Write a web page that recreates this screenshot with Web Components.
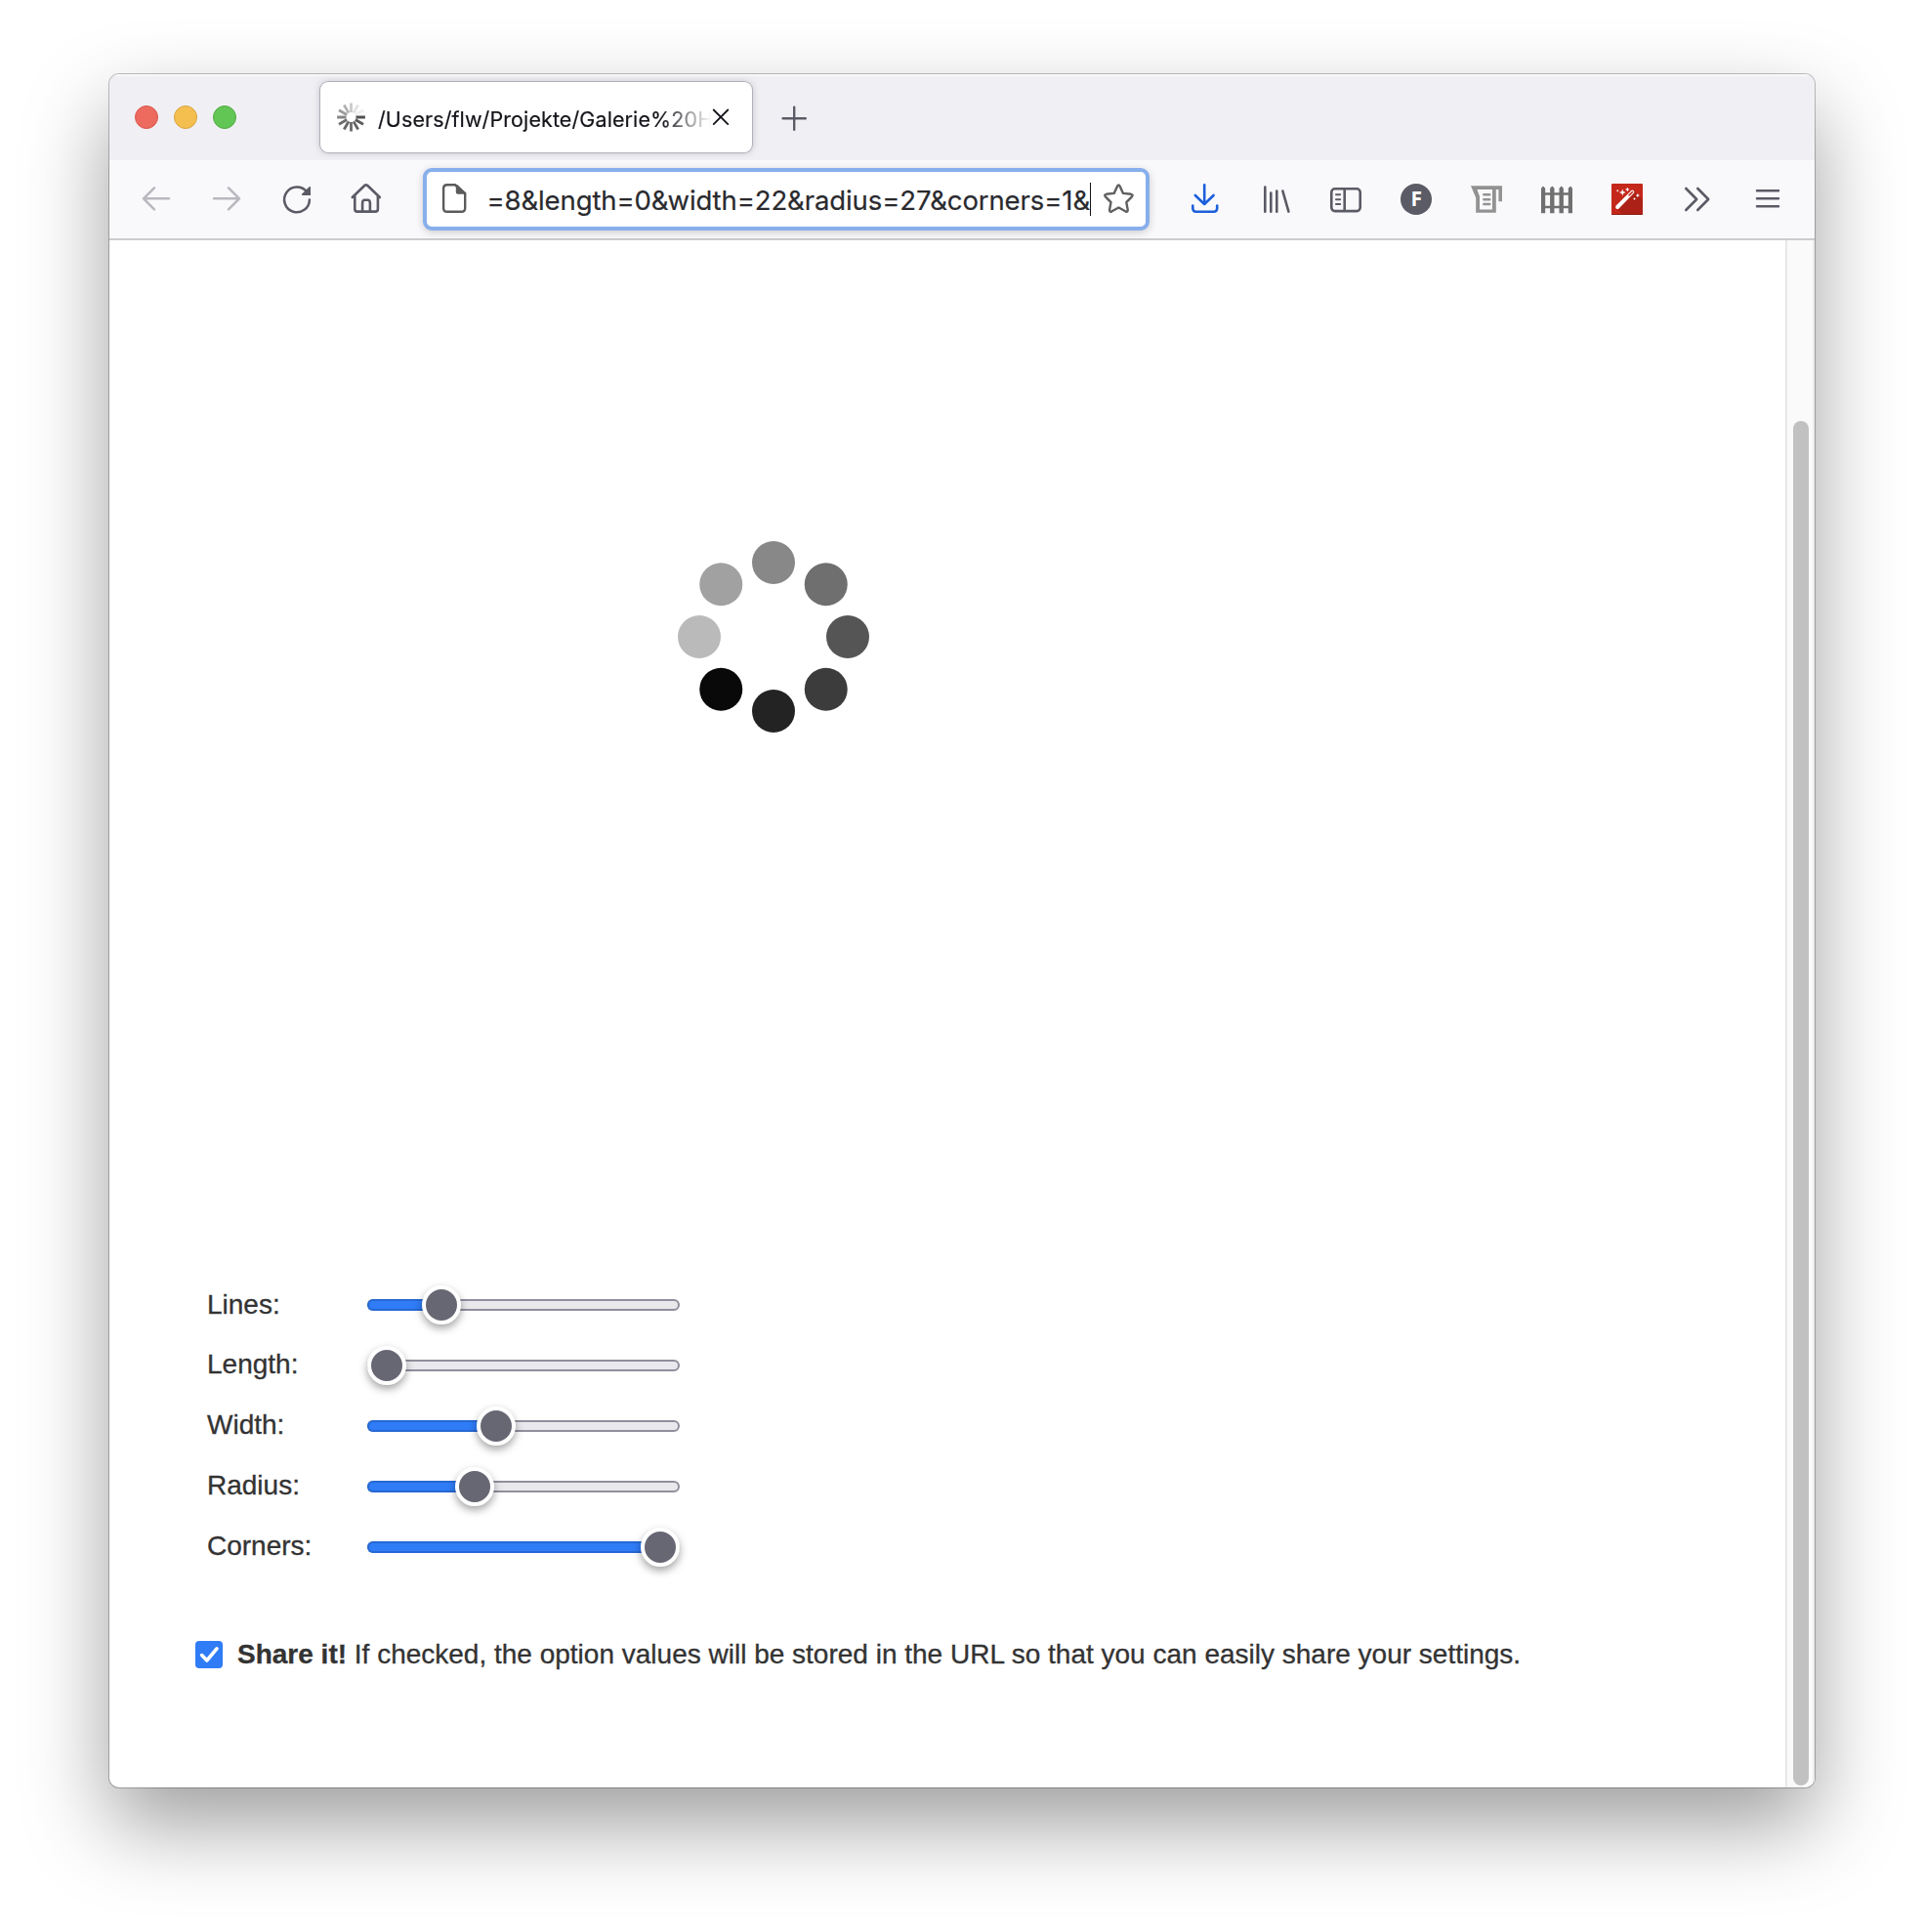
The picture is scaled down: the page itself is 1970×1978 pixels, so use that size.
<!DOCTYPE html>
<html lang="en">
<head>
<meta charset="utf-8">
<title>Spinner options</title>
<style>
html,body{margin:0;height:1978px;background:#fff;overflow:hidden}
body{box-sizing:border-box;padding:76px 112px 148px}
</style>
</head>
<body>
<browser-window>
  <tab-bar slot="chrome"><browser-tab>/Users/flw/Projekte/Galerie%20H</browser-tab></tab-bar>
  <nav-toolbar slot="chrome"><url-field>=8&amp;length=0&amp;width=22&amp;radius=27&amp;corners=1&amp;</url-field></nav-toolbar>
  <dot-spinner></dot-spinner>
  <option-list>
    <option-slider at="75.7">Lines:</option-slider>
    <option-slider at="20">Length:</option-slider>
    <option-slider at="131.8">Width:</option-slider>
    <option-slider at="109.8">Radius:</option-slider>
    <option-slider at="300">Corners:</option-slider>
  </option-list>
  <share-check><b>Share it!</b> If checked, the option values will be stored in the URL so that you can easily share your settings.</share-check>
</browser-window>
<script>
const define = (name, html, setup) => customElements.define(name, class extends HTMLElement {
  connectedCallback() {
    if (this.shadowRoot) return;
    this.attachShadow({ mode: 'open' }).innerHTML = html;
    if (setup) setup(this, this.shadowRoot);
  }
});

const icons = {
  back: `<g fill="none" stroke="#b8b8bf" stroke-width="2.5" stroke-linecap="round" stroke-linejoin="round"><path d="M7 17.3H33M18 6.3L7 17.3L18 28.3"/></g>`,
  forward: `<g fill="none" stroke="#b8b8bf" stroke-width="2.5" stroke-linecap="round" stroke-linejoin="round"><path d="M7 17.3H33M22 6.3L33 17.3L22 28.3"/></g>`,
  reload: `<path d="M30.2 10.5A12.9 12.9 0 1 0 32.9 18.5" fill="none" stroke="#5b5b66" stroke-width="2.5" stroke-linecap="round"/><path d="M34 5.2V14H25.6Q24.4 13.7 25.2 12.6L32.6 5.2Q33.4 4.6 34 5.2Z" fill="#5b5b66"/>`,
  home: `<g fill="none" stroke="#5b5b66" stroke-width="2.6" stroke-linecap="round" stroke-linejoin="round"><path d="M4.8 16L17.5 3.8Q18.8 2.8 20.1 3.8L32.8 16M7.3 14.5V28Q7.3 30.6 9.9 30.6H28.3Q30.9 30.6 30.9 28V14.5M15.1 30V22Q15.1 18.8 17.5 18.8H20.5Q22.9 18.8 22.9 22V30"/></g>`,
  page: `<path d="M14 3.3H21L31.2 12V27Q31.2 30.8 27.4 30.8H12.8Q9.1 30.8 9.1 27V7Q9.1 3.3 12.8 3.3Z" fill="none" stroke="#5b5b5b" stroke-width="2.4"/><path d="M21.8 3V10.7Q21.8 12.8 23.9 12.8H32.2V11.7L23.2 3Z" fill="#5b5b5b"/>`,
  star: `<path transform="translate(-.6 0)" d="M18.6 4.7Q20 2.3 21.3 4.7L24.6 11.9L32.6 12.8Q35.3 13.4 33.5 15.3L27.9 21.1L29.3 28.6Q29.6 31.6 26.9 30.3L20 26.5L13.1 30.3Q10.4 31.6 10.7 28.6L12.1 21.1L6.5 15.3Q4.7 13.4 7.4 12.8L15.3 11.9Z" fill="none" stroke="#5f5f61" stroke-width="2.4" stroke-linejoin="round"/>`,
  download: `<g fill="none" stroke="#1d5fdc" stroke-width="2.6" stroke-linecap="round" stroke-linejoin="round"><path d="M20.2 5.3V24.5M10.8 16L20.2 25L29.6 16M8.3 26.5V29.2Q8.3 32.7 11.8 32.7H29.7Q33.2 32.7 33.2 29.2V26.5"/></g>`,
  library: `<g stroke="#5b5b66" stroke-width="2.6" stroke-linecap="round"><path d="M10.3 7.5V32.7M16.3 13.5V32.7M22.3 11.5V32.7M28.4 11.6L34.4 32.6"/></g>`,
  sidebar: `<g fill="none" stroke="#5b5b66" stroke-width="2.6"><rect x="6.3" y="9.3" width="29.4" height="22.8" rx="3.5"/><path d="M19.7 9V32"/><path d="M11 15.3H15.2M11 20.2H15.2M11 25.1H15.2" stroke-width="2" stroke-linecap="round"/></g>`,
  fbadge: `<circle cx="21" cy="20" r="16" fill="#5b5b66"/><text x="21.2" y="27.3" text-anchor="middle" font-family="Noto Sans,sans-serif" font-size="21" font-weight="700" fill="#fff">F</text>`,
  reader: `<path fill="#929292" fill-rule="evenodd" d="M4 6.2H36V22.2H32.4V10H29.8V33.8H9.2V18.6L4 6.2ZM10.4 10L13 17V30.4H26V10Z"/><path d="M17.3 15.3H23.3M17.3 20.2H23.3M17.3 25H23.3" fill="none" stroke="#929292" stroke-width="2.4" stroke-linecap="round"/>`,
  fence: `<g fill="#707070"><path d="M4 34.3V8.7L6 6.4L8.2 8.7V34.3ZM13.1 34.3V8.7L15.3 6.4L17.5 8.7V34.3ZM22.5 34.3V8.7L24.7 6.4L26.9 8.7V34.3ZM31.8 34.3V8.7L34 6.4L36 8.7V34.3Z"/><path d="M4 13.2H36V15.7H4ZM4 26.8H36V29.3H4Z"/></g>`,
  wand: `<rect x="4" y="4" width="32" height="32" rx="1" fill="#c4281b"/><path d="M27.5 11.5L36 20V35H15L9 29Z" fill="#ac2117"/><path d="M4 35H36Q36 36 35 36H5Q4 36 4 35Z" fill="#8e180f"/><path d="M24.6 10.7Q25.6 10.2 26.8 11.3Q27.8 12.6 27.1 13.6L11.6 29.6Q10 30.7 8.7 29.4Q7.6 28 8.7 26.6Z" fill="#fff"/><path d="M21.5 15.8L25.4 12L26 12.7L22.2 16.5Z" fill="#c4281b" stroke="#c4281b" stroke-width=".8"/><path d="M15.3 9.5L16.2 12L18.7 13L16.2 13.9L15.3 16.4L14.4 13.9L11.9 13L14.4 12ZM20.3 7.7L21 9.3L22.6 10L21 10.7L20.3 12.3L19.6 10.7L18 10L19.6 9.3ZM30.8 14L31.5 15.4L33 16L31.5 16.7L30.8 18.2L30.1 16.7L28.6 16L30.1 15.4ZM27.5 18L28 19.2L29.2 19.6L28 20.1L27.5 21.3L27 20.1L25.8 19.6L27 19.2ZM10.2 9.7L10.7 10.8L11.8 11.2L10.7 11.6L10.2 12.7L9.7 11.6L8.6 11.2L9.7 10.8Z" fill="#fff"/>`,
  more: `<g fill="none" stroke="#5b5b66" stroke-width="2.6" stroke-linecap="round" stroke-linejoin="round"><path d="M8.3 9L19.2 20L8.3 31M20.3 9L31.2 20L20.3 31"/></g>`,
  menu: `<path d="M9 11.3H31M9 19.3H31M9 27.2H31" stroke="#5b5b66" stroke-width="2.5" stroke-linecap="round"/>`,
  close: `<path d="M12.7 12.5L27.3 27.1M27.3 12.5L12.7 27.1" stroke="#15141a" stroke-width="1.8" stroke-linecap="round"/>`,
  plus: `<path d="M19.2 9.6V32.8M7.6 21.2H30.8" stroke="#5b5b66" stroke-width="2.4" stroke-linecap="round"/>`
};
define('ui-icon', `<style>:host{display:block;width:40px;height:40px;flex:none}svg{display:block}</style><svg width="40" height="40" viewBox="0 0 40 40"></svg>`,
  (el, root) => { root.querySelector('svg').innerHTML = icons[el.getAttribute('name')]; });

define('browser-window', `<style>
:host{display:flex;flex-direction:column;box-sizing:border-box;width:1746px;height:1754px;border-radius:10px;background:#fff;overflow:hidden;
 box-shadow:0 0 0 1px rgba(0,0,0,.24),0 38px 86px rgba(0,0,0,.385)}
.view{flex:1;display:flex;min-height:0}
.page{flex:1;display:flex;flex-direction:column;align-items:flex-start}
</style><slot name="chrome"></slot><div class="view"><div class="page"><slot></slot></div><scroll-bar></scroll-bar></div>`);

define('scroll-bar', `<style>
:host{display:flex;box-sizing:border-box;width:30px;padding:185px 4px 2px 6px;background:#fafafa;border-left:2px solid #e7e7e7;border-right:2px solid #ededed}
div{width:16px;border-radius:8px;background:#c1c1c1}
</style><div></div>`);

define('tab-bar', `<style>
:host{display:flex;align-items:flex-start;box-sizing:border-box;height:88px;padding:8px 0 0 26px;background:#f0f0f4;box-shadow:inset 0 2px 1px rgba(255,255,255,.6)}
.lights{display:flex;gap:16px;margin:24px 86px 0 0}
i{width:24px;height:24px;border-radius:50%;box-sizing:border-box;border:1px solid}
ui-icon{margin:16px 0 0 24px}
</style><div class="lights"><i style="background:#ed6a5e;border-color:#d9574b"></i><i style="background:#f5bf4f;border-color:#daa23f"></i><i style="background:#62c655;border-color:#4faa41"></i></div><slot></slot><ui-icon name="plus"></ui-icon>`);

define('browser-tab', `<style>
:host{display:flex;align-items:center;box-sizing:border-box;width:442px;height:72px;padding:0 12px 0 16px;border-radius:8px;background:#fff;box-shadow:0 0 0 .8px rgba(128,128,142,.55),0 0 7px rgba(128,128,142,.5)}
svg{flex:none}
span{flex:none;width:340px;margin-left:12px;padding-top:3px;overflow:hidden;white-space:nowrap;font:21.5px/30px Inter,sans-serif;letter-spacing:.1px;color:#15141a;-webkit-text-stroke:.2px #15141a;
 -webkit-mask:linear-gradient(to right,#000 290px,transparent 342px);mask:linear-gradient(to right,#000 290px,transparent 342px)}
ui-icon{margin-left:-9px}
</style><svg width="31" height="30" viewBox="-15.5 -15 31 30"></svg><span><slot></slot></span><ui-icon name="close"></ui-icon>`,
  (el, root) => {
    const shades = ['#c9c9c9','#e2e2e2','#f0f0f0','#505050','#5a5a5a','#636363','#6a6a6a','#666','#6e6e6e','#858585','#9b9b9b','#b2b2b2'];
    root.querySelector('svg').innerHTML = shades.map((c, i) => `<path d="M0-5V-14.4" stroke="${c}" stroke-width="2.8" transform="rotate(${i * 30})"/>`).join('');
  });

define('nav-toolbar', `<style>
:host{display:flex;align-items:center;box-sizing:border-box;height:82px;padding-left:12px;background:#f9f9fb;border-bottom:2px solid #ccccce}
.group{flex:none;display:flex;gap:32px;padding:0 16px}
.left{margin-right:21px;padding-top:4px}
.right{margin-left:20px;padding-right:0}
ui-icon[name=reader]{margin-left:1px}
</style><div class="group left"><ui-icon name="back"></ui-icon><ui-icon name="forward"></ui-icon><ui-icon name="reload"></ui-icon><ui-icon name="home"></ui-icon></div>
<slot></slot>
<div class="group right"><ui-icon name="download"></ui-icon><ui-icon name="library"></ui-icon><ui-icon name="sidebar"></ui-icon><ui-icon name="fbadge"></ui-icon><ui-icon name="reader"></ui-icon><ui-icon name="fence"></ui-icon><ui-icon name="wand"></ui-icon><ui-icon name="more"></ui-icon><ui-icon name="menu"></ui-icon></div>`);

define('url-field', `<style>
:host{flex:none;display:flex;align-items:center;box-sizing:border-box;width:744px;height:64px;padding-left:8px;border:4px solid #87afeb;border-radius:9px;background:#fff;box-shadow:0 2px 8px rgba(0,0,0,.18)}
span{display:flex;justify-content:flex-end;box-sizing:border-box;width:617px;height:34px;margin:0 9px 0 15px;white-space:nowrap;font:27.5px/37px Inter,sans-serif;letter-spacing:-.1px;color:#2a2a2e;-webkit-text-stroke:.2px #2a2a2e;border-right:1px solid #15141a}
ui-icon{margin-top:3px}
</style><ui-icon name="page"></ui-icon><span><slot></slot></span><ui-icon name="star"></ui-icon>`);

define('dot-spinner', `<style>:host{display:block;margin:308px 0 0 582px}svg{display:block}</style><svg width="196" height="196" viewBox="-98 -98 196 196"></svg>`,
  (el, root) => {
    const shades = ['#888','#6f6f6f','#555','#3c3c3c','#232323','#090909','#bababa','#a1a1a1'];
    root.querySelector('svg').innerHTML = shades.map((c, i) => {
      const a = i * Math.PI / 4;
      return `<circle cx="${76 * Math.sin(a)}" cy="${-76 * Math.cos(a)}" r="22" fill="${c}"/>`;
    }).join('');
  });

define('option-list', `<style>:host{display:flex;flex-direction:column;margin:555px 0 0 100px}</style><slot></slot>`);

define('option-slider', `<style>
:host{display:flex;align-items:center;height:62px;font:28px/32px "Liberation Sans",sans-serif;color:#333;-webkit-text-stroke:.3px #333}
label{flex:none;width:164px;padding-bottom:3px;white-space:nowrap}
:host(:first-child) label{padding-bottom:1px}
.track{flex:none;display:flex;align-items:center;box-sizing:border-box;width:320px;height:12px;border:2px solid #8f8f9d;border-radius:6px;background:#e9e9ed}
.fill{flex:none;box-sizing:border-box;height:12px;margin-left:-2px;border:2px solid #2668d4;border-right:0;border-radius:6px 0 0 6px;background:#2f7cf6}
.thumb{flex:none;box-sizing:border-box;width:40px;height:40px;margin-left:-20px;border:4px solid #fff;border-radius:50%;background:#676774;box-shadow:0 4px 8px rgba(0,0,0,.36)}
</style><label><slot></slot></label><div class="track"><div class="fill"></div><div class="thumb"></div></div>`,
  (el, root) => { root.querySelector('.fill').style.width = el.getAttribute('at') + 'px'; });

define('share-check', `<style>
:host{display:flex;align-items:center;margin:62px 0 0 88px;height:34px;font:28px/32px "Liberation Sans",sans-serif;color:#333;-webkit-text-stroke:.3px #333;white-space:nowrap}
svg{display:block;margin-right:15px}
p{margin:0}
</style><svg width="28" height="28" viewBox="0 0 28 28"><rect width="28" height="28" rx="4" fill="#2f7cf6"/><path d="M6.6 14.6L11.8 20L22 7.8" fill="none" stroke="#fff" stroke-width="3.6" stroke-linecap="round" stroke-linejoin="round"/></svg><p><slot></slot></p>`);
</script>
</body>
</html>
